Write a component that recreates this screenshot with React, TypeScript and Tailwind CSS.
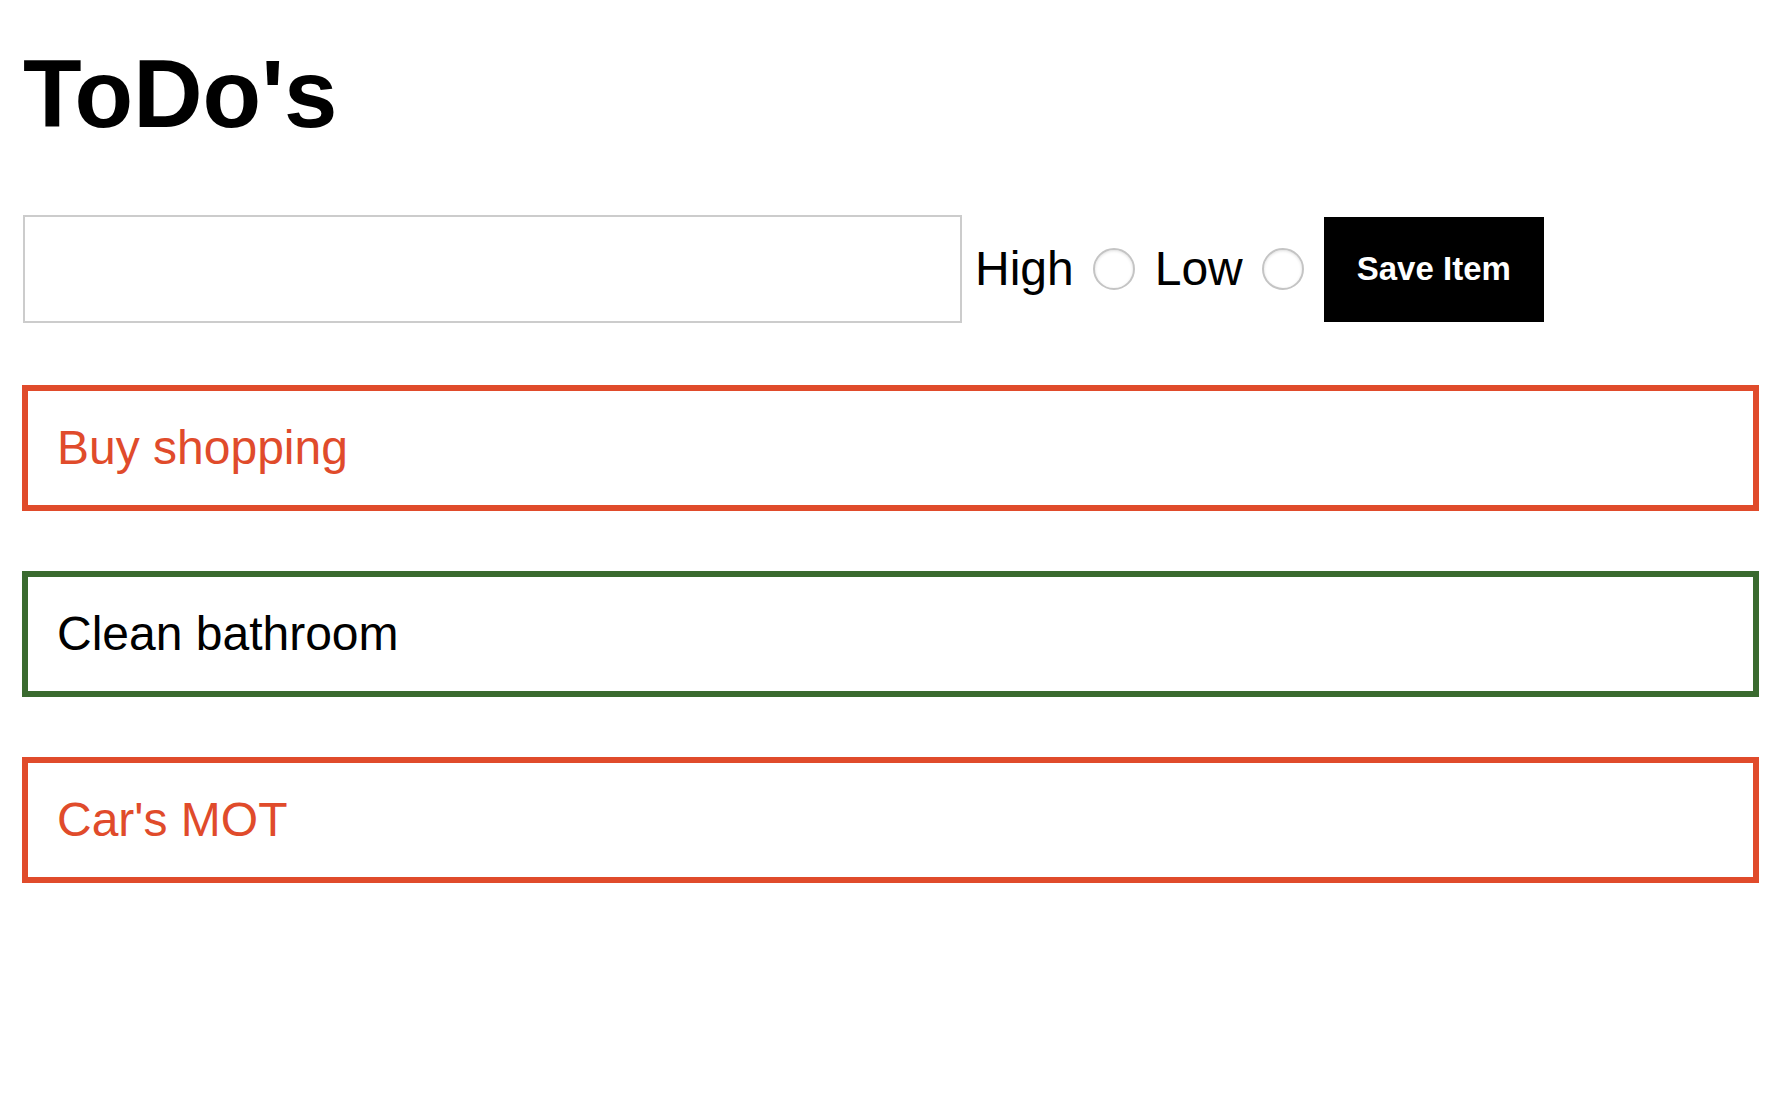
import React, { useState } from 'react';

type Todo = { id: number; text: string; priority: 'high' | 'low' };

export default function App() {
    const [text, setText] = useState('');
    const [priority, setPriority] = useState<'high' | 'low' | ''>('');
    const [todos, setTodos] = useState<Todo[]>([
        { id: 1, text: 'Buy shopping', priority: 'high' },
        { id: 2, text: 'Clean bathroom', priority: 'low' },
        { id: 3, text: "Car's MOT", priority: 'high' },
    ]);

    const saveItem = () => {
        if (!text.trim()) return;
        setTodos([...todos, { id: Date.now(), text, priority: priority === 'low' ? 'low' : 'high' }]);
        setText('');
        setPriority('');
    };

    return (
        <div className="min-h-screen bg-white pl-[22px] pr-[19px] pt-[46px] font-['Liberation_Sans',Arial,Helvetica,sans-serif] text-black">
            <h1 className="text-[96px] font-bold leading-none pl-[1px]">ToDo's</h1>

            {/* New item row */}
            <div className="mt-[73px] flex items-center">
                <input
                    value={text}
                    onChange={(e) => setText(e.target.value)}
                    className="ml-[1px] h-[108px] w-[939px] border-2 border-[#cccccc] bg-white px-4 text-[40px] outline-none"
                />
                <label className="ml-[13px] text-[48px] leading-none">High</label>
                <input
                    type="radio"
                    name="priority"
                    checked={priority === 'high'}
                    onChange={() => setPriority('high')}
                    className="ml-[19px] h-[42px] w-[42px] appearance-none rounded-full border-2 border-[#c4c4c4] bg-white shadow-[inset_0_1px_3px_rgba(0,0,0,0.12)] checked:border-[#3b82f6] checked:border-[12px]"
                />
                <label className="ml-[20px] text-[48px] leading-none">Low</label>
                <input
                    type="radio"
                    name="priority"
                    checked={priority === 'low'}
                    onChange={() => setPriority('low')}
                    className="ml-[19px] h-[42px] w-[42px] appearance-none rounded-full border-2 border-[#c4c4c4] bg-white shadow-[inset_0_1px_3px_rgba(0,0,0,0.12)] checked:border-[#3b82f6] checked:border-[12px]"
                />
                <button
                    type="button"
                    onClick={saveItem}
                    className="ml-[20px] h-[105px] w-[220px] bg-black text-[33px] font-bold text-white"
                >
                    Save Item
                </button>
            </div>

            {/* Items */}
            <div className="mt-[62px] flex flex-col gap-[60px]">
                {todos.map((todo) => (
                    <div
                        key={todo.id}
                        className={`flex h-[126px] items-center border-[6px] pl-[29px] text-[48px] ${todo.priority === 'high' ? 'border-[#e04b2b] text-[#e04b2b]' : 'border-[#3a6a2f] text-black'}`}
                    >
                        {todo.text}
                    </div>
                ))}
            </div>
        </div>
    );
}
